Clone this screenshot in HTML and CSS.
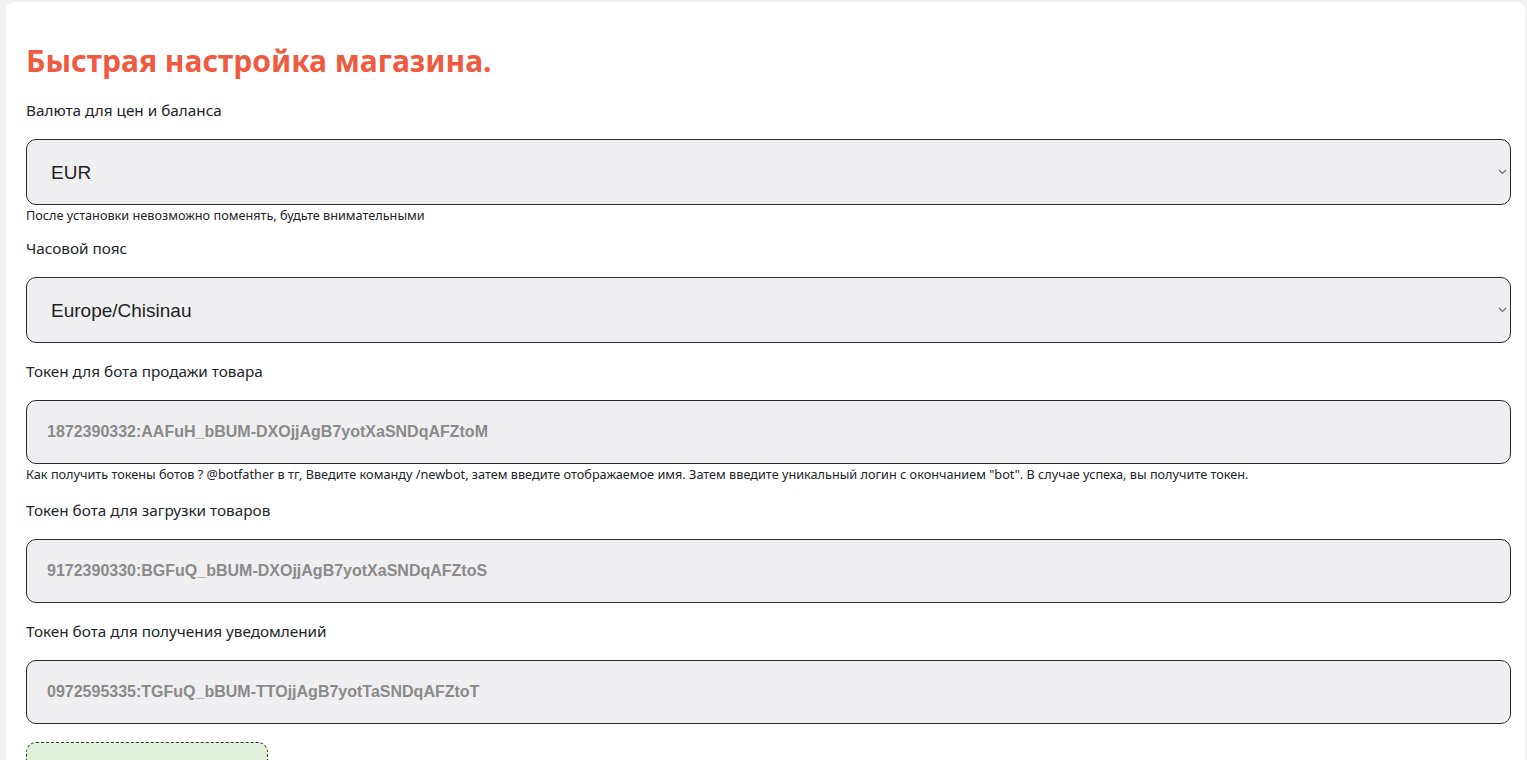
FILE: index.html
```html
<html lang="ru">
<head>
  <meta charset="UTF-8">
  <title>Быстрая настройка магазина</title>
  <link rel="stylesheet" href="styles.css">
</head>
<body>

  <div class="card">
    <h1 class="title">Быстрая настройка магазина.</h1>

    <div class="field">
      <label class="label" for="currency">Валюта для цен и баланса</label>
      <div class="select-wrap">
        <select class="control select" id="currency">
          <option>EUR</option>
          <option>USD</option>
          <option>RUB</option>
        </select>
        <svg class="chevron" width="9" height="6" viewBox="0 0 9 6"><path d="M1 1l3.5 3.5L8 1" fill="none" stroke="#6b6b6b" stroke-width="1.2"/></svg>
      </div>
      <div class="hint hint-tight">После установки невозможно поменять, будьте внимательными</div>
    </div>

    <div class="field">
      <label class="label" for="timezone">Часовой пояс</label>
      <div class="select-wrap">
        <select class="control select" id="timezone">
          <option>Europe/Chisinau</option>
          <option>Europe/Moscow</option>
        </select>
        <svg class="chevron" width="9" height="6" viewBox="0 0 9 6"><path d="M1 1l3.5 3.5L8 1" fill="none" stroke="#6b6b6b" stroke-width="1.2"/></svg>
      </div>
    </div>

    <div class="field">
      <label class="label" for="sale-token">Токен для бота продажи товара</label>
      <input class="control token" id="sale-token" type="text" value="1872390332:AAFuH_bBUM-DXOjjAgB7yotXaSNDqAFZtoM">
      <div class="hint">Как получить токены ботов ? @botfather в тг, Введите команду /newbot, затем введите отображаемое имя. Затем введите уникальный логин с окончанием "bot". В случае успеха, вы получите токен.</div>
    </div>

    <div class="field">
      <label class="label" for="load-token">Токен бота для загрузки товаров</label>
      <input class="control token" id="load-token" type="text" value="9172390330:BGFuQ_bBUM-DXOjjAgB7yotXaSNDqAFZtoS">
    </div>

    <div class="field">
      <label class="label" for="notify-token">Токен бота для получения уведомлений</label>
      <input class="control token" id="notify-token" type="text" value="0972595335:TGFuQ_bBUM-TTOjjAgB7yotTaSNDqAFZtoT">
    </div>

    <button class="save">Сохранить</button>
  </div>

</body>
</html>
```

FILE: styles.css
```css
body {
  margin: 0;
  background: #f1f1f3;
  font-family: 'Noto Sans', sans-serif;
  color: #212529;
}

/* Карточка настроек */
.card {
  margin: 2px 2px 0 6px;
  padding: 36px 14px 40px 20px;
  background: #fff;
  border-radius: 8px;
}

.title {
  margin: 0 0 16px;
  font-size: 30px;
  line-height: 46px;
  font-weight: 700;
  color: #f05a40;
}

.field {
  margin-bottom: 18px;
}

.label {
  display: block;
  font-size: 15.3px;
  line-height: 20px;
  margin-bottom: 19px;
}

.control {
  display: block;
  box-sizing: border-box;
  width: 100%;
  border: 1px solid #2b2b2b;
  border-radius: 10px;
  background-color: #efeff1;
  font-family: 'Liberation Sans', Arial, sans-serif;
  outline: none;
}

.select-wrap {
  position: relative;
}

.select {
  appearance: none;
  -webkit-appearance: none;
  height: 66px;
  padding: 0 24px;
  font-size: 19px;
  color: #222;
}

.chevron {
  position: absolute;
  right: 4px;
  top: 30px;
  pointer-events: none;
}

.token {
  height: 64px;
  padding: 0 20px;
  font-size: 16px;
  font-weight: 700;
  color: #8a8a8a;
}

.hint {
  margin-top: 2px;
  font-size: 12.7px;
  line-height: 16px;
}

.hint-tight {
  margin-bottom: -3px;
}

.save {
  display: block;
  width: 242px;
  height: 64px;
  padding-top: 30px;
  border: 1px dashed #333;
  border-radius: 10px;
  background: #e3f0d9;
  font-family: 'Noto Sans', sans-serif;
  font-size: 16px;
  color: #212529;
  cursor: pointer;
}
```
